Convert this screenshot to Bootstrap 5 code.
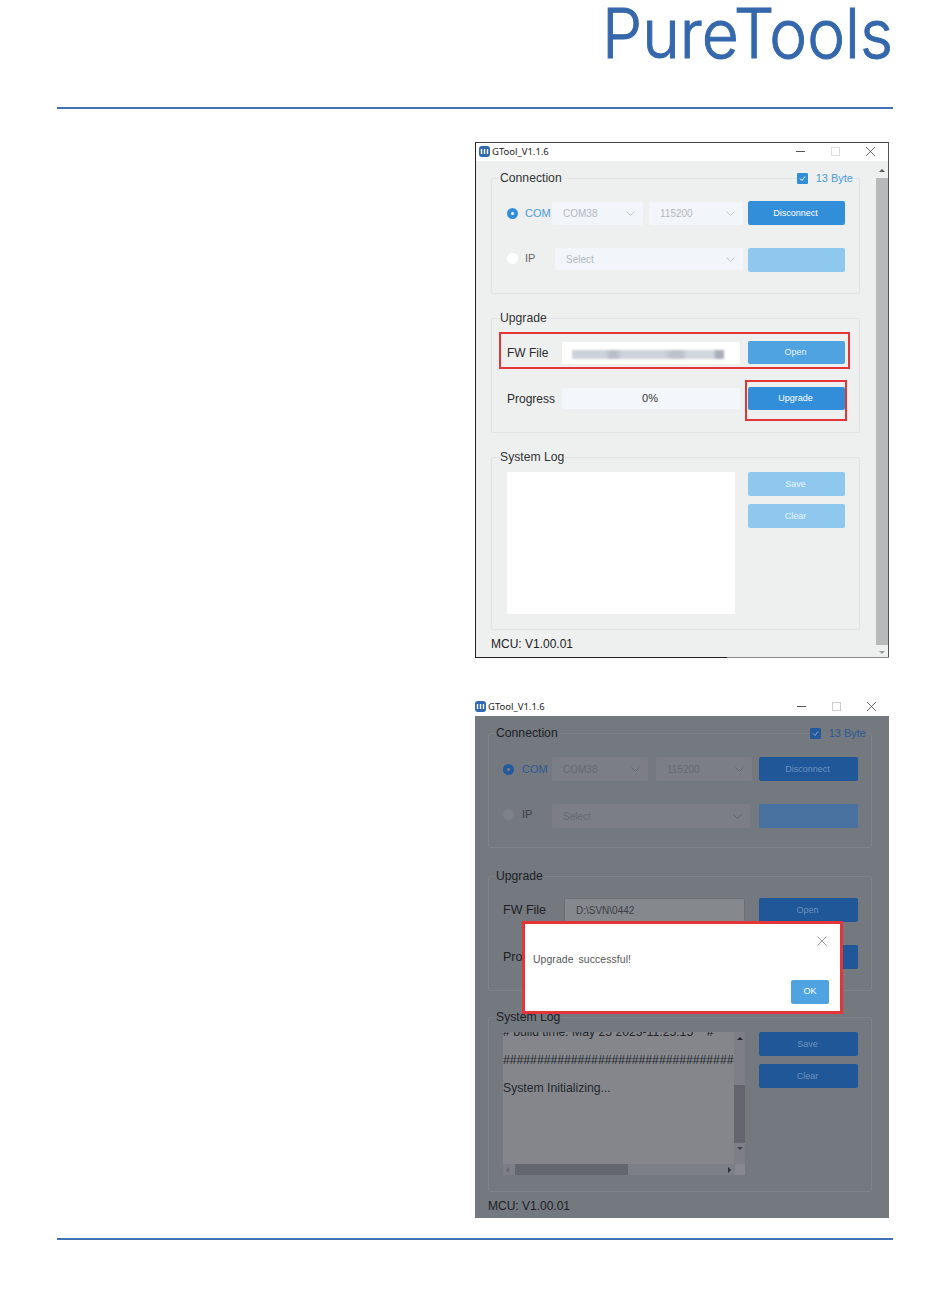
<!DOCTYPE html>
<html lang="en">
<head>
<meta charset="utf-8">
<title>PureTools GTool</title>
<link href="https://cdn.jsdelivr.net/npm/bootstrap@5.3.0/dist/css/bootstrap.min.css" rel="stylesheet">
<style>
html,body{height:1295px;overflow:hidden}
body{background:#fff;font-family:"Liberation Sans",Arial,sans-serif;color:#222;padding:0 57px}
.rule{height:2px;background:#3f72b6}
.hdr{height:107px}
.logo-svg{overflow:visible}
.logo-text{font-family:Inter,"Liberation Sans",sans-serif;font-weight:300;font-size:68px;fill:#3467ab;stroke:#3467ab;stroke-width:1px}
.win{width:414px;margin-left:auto;margin-right:4px;position:relative}
.win-a{height:516px;margin-top:33px;border:1px solid #555;border-top-color:#444;border-left-color:#222;border-bottom-color:#222;background:#eef0f0}
.win-a::after{content:"";position:absolute;left:251px;right:-1px;bottom:-1px;height:1px;background:#8b8b8b}
.win-b{height:521px;margin-top:39px}
.tbar{height:19px;background:#fff;font:9.5px "Noto Sans",sans-serif;color:#222;gap:2px}
.win-a .tbar{height:18px;padding:0 0 2px 3px}
.tctl{margin-left:auto;gap:26px;padding-right:13px}
.bodyb{height:502px;background:#74787f;padding:17px 0 0 13px}
.mainb{width:400px;padding-left:15px}
.grp{border:1px solid #e2e4e5;border-radius:2px;position:relative}
.win-a .grp{width:369px;height:115px;margin-top:24px}
.win-a .grp:first-child{margin-top:17px;height:116px}
.win-a .grp-log{height:173px!important}
.win-b .grp{width:384px;height:115px;margin-top:28px;border-color:#7f8389}
.win-b .grp:first-child{margin-top:0}
.win-b .grp-log{height:175px!important;margin-top:26px!important}
.ttl{height:14px;margin-top:-8px;padding:0 6px 0 8px;font-size:12.2px;line-height:14px;justify-content:space-between}
.ttl b{font-weight:400;background:#eef0f0;padding-right:1px;color:#333}
.win-b .ttl{padding:0 5px 0 7px}
.win-b .ttl b{background:#74787f;color:#1e2126}
.chk{font-size:11px;color:#4a9ad8;background:#eef0f0;gap:8px}
.win-b .chk{background:#74787f;color:#2c5a92}
.box{width:11px;height:11px;background:#338ed9;border-radius:1px}
.win-b .box{background:#225a9c}
.rw{padding-left:15px}
.win-b .rw{padding-left:14px}
.r1{margin-top:16px;height:24px}
.win-b .r1{margin-top:17px}
.r2{margin-top:23px;height:24px}
.r2 .rad,.r2 .off{margin-bottom:3px}
.ru1{margin-top:16px;height:23px}
.win-b .ru1{margin-top:15px;height:24px}
.ru2{margin-top:23px;height:23px}
.win-b .ru2{height:24px}
.rl{margin-top:8px;gap:13px}
.win-b .rl{margin-top:8px;gap:14px}
.rad{width:11px;height:11px;border-radius:50%;background:#fff;flex:none}
.rad-on{background:#338ed9;border:3px solid #338ed9;position:relative}
.rad-on i{display:block;width:3px;height:3px;margin:1px;border-radius:50%;background:#fff}
.win-b .rad{background:#7c8087}
.win-b .rad-on{background:#225a9c;border-color:#225a9c}
.win-b .rad-on i{background:#7c8087}
.rtxt{font-size:11px;color:#777;flex:none}
.on{color:#4a9ad8;width:25px;margin-left:7px}
.off{width:25px;margin-left:7px;color:#666}
.win-b .on{color:#2a5a94;margin-left:8px}
.win-b .off{color:#3c4046;margin-left:8px}
.sel{height:23px;background:#f2f5f9;border-radius:2px;font-size:10px;color:#b3b8bf;padding:0 8px 0 11px;justify-content:space-between;flex:none}
.win-b .sel{background:#7b7e85;color:#666a70;height:24px}
.s1{width:91px;margin-left:2px}
.s2{width:94px;margin-left:6px}
.s3{width:188px;margin:0 0 2px 5px;height:22px}
.win-b .s1{width:96px;margin-left:5px}
.win-b .s2{width:96px;margin-left:8px}
.win-b .s3{width:198px;margin:0 0 0 5px}
.bt{width:97px;height:100%;min-height:23px;padding:0 2px 0 0;border:0;border-radius:2px;font-size:9px;color:#fff;background:#338ed9;flex:none;line-height:1;margin-left:auto;margin-right:14px}
.bt:disabled{opacity:1;color:#eaf4fb;background:#8ec8ef}
.bt-open,.bt-open:disabled{background:#4fa3e0;color:#e8f3fb}
.win-b .bt,.win-b .bt:disabled{width:99px;background:#1f5798;color:#6f93bd;margin-right:13px}
.win-b .bt-pale,.win-b .bt-pale:disabled{background:#4a72a0}
.lab{font-size:12px;flex:none;color:#2a2a2a}
.ru1 .lab{width:55px}
.ru2 .lab{width:54px}
.win-b .lab{width:60px;font-size:12.5px;color:#1e2126}
.fld{width:178px;height:22px;background:#fff;position:relative;border-radius:2px;flex:none}
.smear{position:absolute;left:10px;top:8px;width:152px;height:9px;filter:blur(1px);background:linear-gradient(90deg,#ccd1da 0 22%,#b8bdc8 25% 29%,#ced2da 33% 60%,#bcc1cb 66% 72%,#d2d6dd 76% 93%,#a9aeb9 95% 100%)}
.fld-b{width:181px;height:24px;margin-left:1px;background:#85888d;border:1px solid #6d7176;font-size:10px;color:#3c4046;padding-left:11px}
.prog{width:178px;height:21px;margin-left:1px;background:#f3f6fa;font-size:11px;color:#333;border-radius:2px;flex:none;padding-right:2px}
.prog-b{width:181px;margin-left:1px;height:24px;background:#7b7e85}
.redbox{position:absolute;border:2px solid #e53538;pointer-events:none}
.rb1{left:7px;top:13px;width:351px;height:37px}
.rb2{left:253px;top:61px;width:102px;height:41px}
.logw{width:228px;height:142px;background:#fff;flex:none}
.btcol{gap:8px;width:97px}
.btcol .bt{height:24px;margin:0}
.win-b .btcol{width:99px}
.win-b .btcol .bt{margin:0}
.mcu{font-size:12px;line-height:16px;margin-top:6px;color:#222}
.win-b .mcu{color:#1e2126}
.sb{width:12px;height:497px;flex:none;align-items:center}
.thumb{width:12px;height:467px;background:#b8b9bb;margin:6px 0}
.tri-u,.tri-d,.tri-l,.tri-r{width:0;height:0;border:3px solid transparent;flex:none}
.tri-u{border-top:0;border-bottom-color:#555}
.tri-d{border-bottom:0;border-top-color:#999}
.tri-l{border-left:0;border-right-color:#666}
.tri-r{border-right:0;border-left-color:#2a2d33}
.logb{width:242px;height:143px;flex:none;background:#84868c;overflow:hidden}
.logm{width:231px;height:132px;overflow:hidden;font-size:12.2px;line-height:28px;color:#23272c;white-space:nowrap}
.logm p{margin:0}
.logm p:first-child{margin-top:-14px}
.vs{width:11px;height:132px;background:#7c7f86}
.vs .tri-u{border-bottom-color:#23272c;margin-top:5px}
.vs .tri-d{border-top-color:#3d4047;margin-top:4px}
.vth{width:11px;height:58px;margin-top:45px;background:#63666e}
.hs{height:11px;background:#7c7f86}
.hs .spacer{width:10px;height:11px;background:#85888e;margin-left:auto}
.hth{width:113px;height:11px;background:#63666e;margin-left:6px}
.hsl{padding-left:3px;width:232px}
.hsl .tri-r{margin-left:auto;margin-right:4px}
.modalx{position:absolute;left:47px;top:224px;width:321px;height:93px;background:#fff;border:3px solid #e53538;padding:12px 11px 7px 8px}
.modalx-t{font-size:10.4px;line-height:14px;color:#555;margin-top:7px;word-spacing:2px;letter-spacing:.1px}
.okb{width:38px;height:24px;padding:0;border:0;border-radius:2px;background:#4fa3e0;color:#fff;font-size:9px;margin-top:13px}
.xrow{padding-right:2px;height:10px}
</style>
</head>
<body>
<div class="hdr d-flex justify-content-end">
  <svg class="logo-svg" width="291" height="66" viewBox="0 0 291 66" aria-label="PureTools"><text class="logo-text" x="0" y="58" textLength="291" lengthAdjust="spacingAndGlyphs">PureTools</text></svg>
</div>
<div class="rule"></div>

<!-- first window -->
<div class="win win-a">
  <div class="tbar d-flex align-items-center">
    <svg width="11" height="11" viewBox="0 0 11 11"><rect width="11" height="11" rx="3" fill="#2f68b5"/><path d="M2.500 3v5M5.500 3v5M8.500 3v5" stroke="#fff" stroke-width="1.4"/></svg>
    <span>GTool_V1.1.6</span>
    <div class="tctl d-flex align-items-center">
      <svg width="9" height="9" viewBox="0 0 9 9"><path d="M0 4.500h9" stroke="#555"/></svg>
      <svg width="9" height="9" viewBox="0 0 9 9"><rect x=".5" y=".5" width="8" height="8" fill="none" stroke="#ddd"/></svg>
      <svg width="9" height="9" viewBox="0 0 9 9"><path d="M0 0l9 9M9 0l-9 9" stroke="#444" stroke-width=".8"/></svg>
    </div>
  </div>
  <div class="d-flex">
    <div class="mainb">
      <div class="grp">
        <div class="ttl d-flex align-items-center"><b>Connection</b>
          <div class="chk d-flex align-items-center"><span class="box d-flex"><svg width="11" height="11" viewBox="0 0 11 11"><path d="M3 5.500l2 2 3-4" fill="none" stroke="#fff"/></svg></span>13 Byte</div></div>
        <div class="rw r1 d-flex align-items-center">
          <span class="rad rad-on"><i></i></span><span class="rtxt on">COM</span>
          <div class="sel s1 d-flex align-items-center"><span>COM38</span><svg width="9" height="5" viewBox="0 0 9 5"><path d="M.5.5l4 4 4-4" fill="none" stroke="#c3c7cd"/></svg></div>
          <div class="sel s2 d-flex align-items-center"><span>115200</span><svg width="9" height="5" viewBox="0 0 9 5"><path d="M.5.5l4 4 4-4" fill="none" stroke="#c3c7cd"/></svg></div>
          <button class="btn bt">Disconnect</button>
        </div>
        <div class="rw r2 d-flex align-items-center">
          <span class="rad"></span><span class="rtxt off">IP</span>
          <div class="sel s3 d-flex align-items-center"><span>Select</span><svg width="9" height="5" viewBox="0 0 9 5"><path d="M.5.5l4 4 4-4" fill="none" stroke="#c3c7cd"/></svg></div>
          <button class="btn bt" disabled></button>
        </div>
      </div>
      <div class="grp">
        <div class="ttl d-flex align-items-center"><b>Upgrade</b></div>
        <div class="rw ru1 d-flex align-items-center">
          <span class="lab">FW File</span>
          <div class="fld"><span class="smear"></span></div>
          <button class="btn bt bt-open">Open</button>
        </div>
        <div class="rw ru2 d-flex align-items-center">
          <span class="lab">Progress</span>
          <div class="prog d-flex align-items-center justify-content-center">0%</div>
          <button class="btn bt">Upgrade</button>
        </div>
        <div class="redbox rb1"></div>
        <div class="redbox rb2"></div>
      </div>
      <div class="grp grp-log">
        <div class="ttl d-flex align-items-center"><b>System Log</b></div>
        <div class="rw rl d-flex">
          <div class="logw"></div>
          <div class="btcol d-flex flex-column">
            <button class="btn bt" disabled>Save</button>
            <button class="btn bt" disabled>Clear</button>
          </div>
        </div>
      </div>
      <div class="mcu">MCU: V1.00.01</div>
    </div>
    <div class="sb d-flex flex-column">
      <span class="tri-u mt-2"></span>
      <div class="thumb"></div>
      <span class="tri-d"></span>
    </div>
  </div>
</div>

<!-- second window -->
<div class="win win-b">
  <div class="tbar d-flex align-items-center">
    <svg width="11" height="11" viewBox="0 0 11 11"><rect width="11" height="11" rx="3" fill="#2f68b5"/><path d="M2.500 3v5M5.500 3v5M8.500 3v5" stroke="#fff" stroke-width="1.4"/></svg>
    <span>GTool_V1.1.6</span>
    <div class="tctl d-flex align-items-center">
      <svg width="9" height="9" viewBox="0 0 9 9"><path d="M0 4.500h9" stroke="#555"/></svg>
      <svg width="9" height="9" viewBox="0 0 9 9"><rect x=".5" y=".5" width="8" height="8" fill="none" stroke="#ccc"/></svg>
      <svg width="9" height="9" viewBox="0 0 9 9"><path d="M0 0l9 9M9 0l-9 9" stroke="#444" stroke-width=".8"/></svg>
    </div>
  </div>
  <div class="bodyb">
    <div class="grp">
      <div class="ttl d-flex align-items-center"><b>Connection</b>
        <div class="chk d-flex align-items-center"><span class="box d-flex"><svg width="11" height="11" viewBox="0 0 11 11"><path d="M3 5.500l2 2 3-4" fill="none" stroke="#8da4c2"/></svg></span>13 Byte</div></div>
      <div class="rw r1 d-flex align-items-center">
        <span class="rad rad-on"><i></i></span><span class="rtxt on">COM</span>
        <div class="sel s1 d-flex align-items-center"><span>COM38</span><svg width="9" height="5" viewBox="0 0 9 5"><path d="M.5.5l4 4 4-4" fill="none" stroke="#63676d"/></svg></div>
        <div class="sel s2 d-flex align-items-center"><span>115200</span><svg width="9" height="5" viewBox="0 0 9 5"><path d="M.5.5l4 4 4-4" fill="none" stroke="#63676d"/></svg></div>
        <button class="btn bt">Disconnect</button>
      </div>
      <div class="rw r2 d-flex align-items-center">
        <span class="rad"></span><span class="rtxt off">IP</span>
        <div class="sel s3 d-flex align-items-center"><span>Select</span><svg width="9" height="5" viewBox="0 0 9 5"><path d="M.5.5l4 4 4-4" fill="none" stroke="#63676d"/></svg></div>
        <button class="btn bt bt-pale" disabled></button>
      </div>
    </div>
    <div class="grp grp-up">
      <div class="ttl d-flex align-items-center"><b>Upgrade</b></div>
      <div class="rw ru1 d-flex align-items-center">
        <span class="lab">FW File</span>
        <div class="fld fld-b d-flex align-items-center">D:\SVN\0442</div>
        <button class="btn bt">Open</button>
      </div>
      <div class="rw ru2 d-flex align-items-center">
        <span class="lab">Progress</span>
        <div class="prog prog-b"></div>
        <button class="btn bt">Upgrade</button>
      </div>
    </div>
    <div class="grp grp-log">
      <div class="ttl d-flex align-items-center"><b>System Log</b></div>
      <div class="rw rl d-flex">
        <div class="logb">
          <div class="d-flex">
            <div class="logm">
              <p># build time: May 25 2023-11:25:15 &nbsp;&nbsp; #</p>
              <p>######################################</p>
              <p>System Initializing...</p>
            </div>
            <div class="vs d-flex flex-column align-items-center">
              <span class="tri-u"></span><div class="vth"></div><span class="tri-d"></span>
            </div>
          </div>
          <div class="hs d-flex align-items-center">
            <div class="hsl d-flex align-items-center"><span class="tri-l"></span><div class="hth"></div><span class="tri-r"></span></div>
            <div class="spacer"></div>
          </div>
        </div>
        <div class="btcol d-flex flex-column">
          <button class="btn bt">Save</button>
          <button class="btn bt">Clear</button>
        </div>
      </div>
    </div>
    <div class="mcu">MCU: V1.00.01</div>
  </div>
  <div class="modalx d-flex flex-column">
    <div class="xrow d-flex justify-content-end"><svg width="10" height="10" viewBox="0 0 10 10"><path d="M.5.5l9 9M9.500.5l-9 9" stroke="#8a8a8a" stroke-width=".8"/></svg></div>
    <div class="modalx-t">Upgrade successful!</div>
    <div class="d-flex justify-content-end"><button class="btn okb">OK</button></div>
  </div>
</div>
<div class="rule" style="margin-top:20px"></div>
<script src="https://cdn.jsdelivr.net/npm/bootstrap@5.3.0/dist/js/bootstrap.bundle.min.js"></script>
</body>
</html>
